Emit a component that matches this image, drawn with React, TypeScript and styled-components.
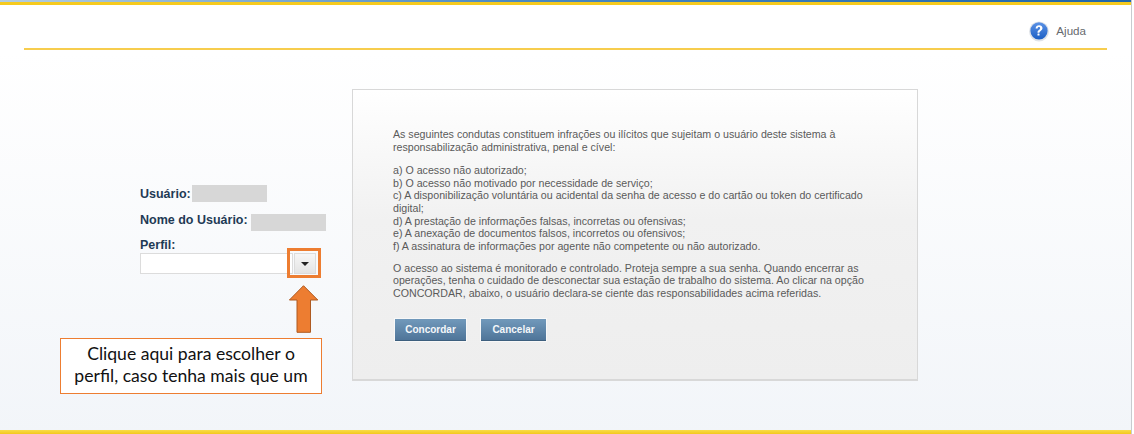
import React from "react";
import styled, { createGlobalStyle } from "styled-components";

const Global = createGlobalStyle`
  html, body { margin: 0; padding: 0; background: #fff; }
  body { font-family: "Liberation Sans", Arial, sans-serif; }
`;

const Page = styled.div`
  position: relative;
  width: 1134px;
  height: 434px;
  overflow: hidden;
  background: #fff;
`;

const Frame = styled.div`
  width: 1132px;
  height: 434px;
  box-sizing: border-box;
  border-right: 1px solid #c8cbcf;
  display: flex;
  flex-direction: column;
  background: linear-gradient(180deg, #ffffff 0%, #ffffff 12%, #f2f5f9 100%);
`;

const TopStrip = styled.div`
  height: 5px;
  flex: none;
  background:
    linear-gradient(90deg, #b3cde0 0%, #4a8ac4 45%, #1f66ab 100%) top / 100% 2px no-repeat,
    #f6ca1e;
`;

const Header = styled.header`
  height: 45px;
  flex: none;
  margin: 0 24px 0 24px;
  box-sizing: border-box;
  border-bottom: 2px solid #f7cd4e;
  display: flex;
  justify-content: flex-end;
  align-items: flex-start;
  padding: 15px 21px 0 0;
  gap: 6px;
`;

const HelpText = styled.span`
  margin-top: 2px;
  font-size: 11.6px;
  line-height: 18px;
  color: #666a6e;
`;

const Main = styled.main`
  flex: 1;
  display: flex;
  align-items: flex-start;
  padding: 39px 0 0 140px;
`;

const Profile = styled.section`
  width: 212px;
  padding-top: 96px;
  display: flex;
  flex-direction: column;
`;

const InfoRow = styled.div<{ $gap: number; $after: number }>`
  display: flex;
  height: 17px;
  margin-bottom: ${(p) => p.$after}px;
  align-items: flex-start;
  gap: ${(p) => p.$gap}px;
`;

const Label = styled.label<{ $top?: number }>`
  margin-top: ${(p) => p.$top ?? 0}px;
  font-size: 12.5px;
  line-height: 16px;
  font-weight: 700;
  color: #1f3a55;
`;

const FieldLabel = styled(Label)`
  line-height: 15px;
`;

const Masked = styled.div`
  width: 75px;
  height: 17px;
  background: #d7d7d7;
`;

const SelectRow = styled.div`
  display: flex;
  align-items: center;
`;

const SelectInput = styled.div`
  width: 153px;
  height: 21px;
  box-sizing: border-box;
  background: #fff;
  border: 1.5px solid #dcdcdc;
`;

const SelectButton = styled.div`
  width: 22px;
  height: 21px;
  margin-left: 1px;
  box-sizing: border-box;
  border: 1px solid #dcdcdc;
  background: linear-gradient(180deg, #f6f6f6, #e4e4e4);
  display: flex;
  align-items: center;
  justify-content: center;
`;

const Caret = styled.span`
  width: 0;
  height: 0;
  border-left: 4px solid transparent;
  border-right: 4px solid transparent;
  border-top: 4px solid #222;
`;

const Panel = styled.section`
  width: 566px;
  height: 292px;
  box-sizing: border-box;
  border: 1px solid #d8d8d8;
  border-bottom-width: 2px;
  background: linear-gradient(180deg, #ffffff 0%, #f1f1f1 45%, #eeeeee 100%);
  padding: 38px 40px 0;
`;

const Paragraph = styled.p<{ $after: number }>`
  margin: 0 0 ${(p) => p.$after}px;
  width: 478px;
  font-size: 10.65px;
  line-height: 12.6px;
  color: #5a5a5a;
`;

const Actions = styled.div`
  display: flex;
  gap: 15px;
  margin: 19px 0 0 2px;
`;

const ActionButton = styled.button<{ $w: number }>`
  width: ${(p) => p.$w}px;
  height: 22px;
  padding: 0;
  border: 0;
  border-bottom: 1px solid #3d5f7e;
  box-shadow: 0 0 0 1px #f8f8f8;
  background: linear-gradient(180deg, #7199bb 0%, #4f7599 100%);
  color: #f4f7fa;
  font: 700 10px "Liberation Sans", Arial, sans-serif;
`;

const Highlight = styled.div`
  position: absolute;
  left: 287px;
  top: 248px;
  width: 34px;
  height: 30px;
  box-sizing: border-box;
  border: 3px solid #ed7d31;
`;

const Arrow = styled.svg`
  position: absolute;
  left: 289px;
  top: 285px;
  width: 30px;
  height: 48px;
`;

const Callout = styled.div`
  position: absolute;
  left: 60px;
  top: 338px;
  width: 262px;
  height: 56px;
  box-sizing: border-box;
  border: 1px solid #ed7d31;
  background: #fff;
  padding-top: 4px;
  text-align: center;
  font-family: Lato, "Noto Sans", sans-serif;
  font-size: 17.6px;
  line-height: 22px;
  color: #111;
`;

const BottomStrip = styled.div`
  height: 4px;
  flex: none;
  background: linear-gradient(180deg, #f8dc4a, #f3c81c);
`;

const HelpIcon = () => (
  <svg width="22" height="22" viewBox="0 0 22 22" aria-hidden="true">
    <defs>
      <linearGradient id="q" x1="0" y1="0" x2="0" y2="1">
        <stop offset="0" stopColor="#5b92e6" />
        <stop offset="1" stopColor="#1c5fc4" />
      </linearGradient>
    </defs>
    <circle cx="11" cy="11.4" r="10" fill="#dfe3e8" />
    <circle cx="11" cy="10.8" r="8.6" fill="url(#q)" />
    <path d="M7.6 8.4c.2-2 1.6-3.1 3.5-3.1 2 0 3.4 1.1 3.4 2.8 0 1.4-.8 2.1-1.8 2.8-.9.6-1.2 1-1.2 1.9H9.5c0-1.6.5-2.3 1.4-2.9.9-.6 1.2-1 1.2-1.7 0-.7-.4-1.2-1.1-1.2-.8 0-1.3.5-1.4 1.4z" fill="#fff" />
    <rect x="9.5" y="13.6" width="2" height="2" rx=".3" fill="#fff" />
  </svg>
);

export default function App() {
  return (
    <>
      <Global />
      <Page>
        <Frame>
          <TopStrip />
          <Header>
            <HelpIcon />
            <HelpText>Ajuda</HelpText>
          </Header>
          <Main>
            <Profile>
              <InfoRow $gap={1} $after={12}>
                <Label $top={1}>Usuário:</Label>
                <Masked />
              </InfoRow>
              <InfoRow $gap={3} $after={7}>
                <Label $top={-2}>Nome do Usuário:</Label>
                <Masked />
              </InfoRow>
              <FieldLabel>Perfil:</FieldLabel>
              <SelectRow>
                <SelectInput />
                <SelectButton>
                  <Caret />
                </SelectButton>
              </SelectRow>
            </Profile>
            <Panel>
              <Paragraph $after={11}>
                As seguintes condutas constituem infrações ou ilícitos que sujeitam o usuário deste sistema à responsabilização administrativa, penal e cível:
              </Paragraph>
              <Paragraph $after={9.5}>
                a) O acesso não autorizado;
                <br />
                b) O acesso não motivado por necessidade de serviço;
                <br />
                c) A disponibilização voluntária ou acidental da senha de acesso e do cartão ou token do certificado digital;
                <br />
                d) A prestação de informações falsas, incorretas ou ofensivas;
                <br />
                e) A anexação de documentos falsos, incorretos ou ofensivos;
                <br />
                f) A assinatura de informações por agente não competente ou não autorizado.
              </Paragraph>
              <Paragraph $after={0}>
                O acesso ao sistema é monitorado e controlado. Proteja sempre a sua senha. Quando encerrar as operações, tenha o cuidado de desconectar sua estação de trabalho do sistema. Ao clicar na opção CONCORDAR, abaixo, o usuário declara-se ciente das responsabilidades acima referidas.
              </Paragraph>
              <Actions>
                <ActionButton $w={71} type="button">Concordar</ActionButton>
                <ActionButton $w={65} type="button">Cancelar</ActionButton>
              </Actions>
            </Panel>
          </Main>
          <BottomStrip />
        </Frame>
        <Highlight />
        <Arrow viewBox="0 0 30 48" aria-hidden="true">
          <path d="M14.5.7 28.8 15H21.5V47.3H8V15H.4Z" fill="#ed7d31" stroke="#ae5a21" strokeWidth="1" />
        </Arrow>
        <Callout>
          Clique aqui para escolher o
          <br />
          perfil, caso tenha mais que um
        </Callout>
      </Page>
    </>
  );
}
